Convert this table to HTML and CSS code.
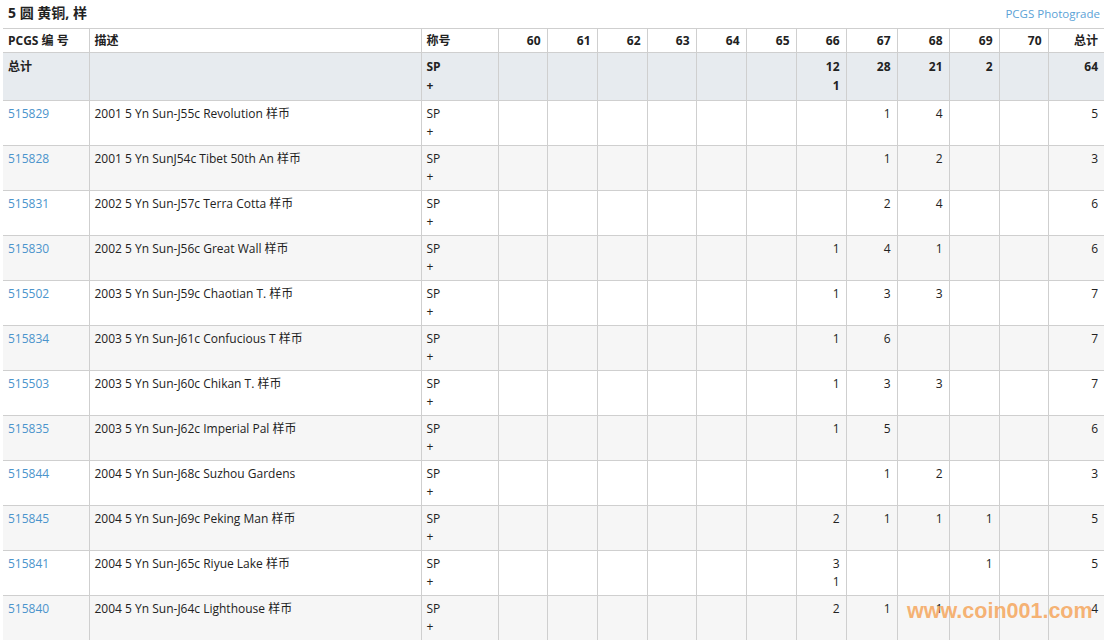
FILE: index.html
```html
<!DOCTYPE html>
<html lang="zh">
<head>
<meta charset="utf-8">
<link rel="stylesheet" href="styles.css">
</head>
<body>
<div class="page">
  <div class="topbar">
    <h1 class="title">5 圆 黄铜, 样</h1>
    <a class="photograde" href="#">PCGS Photograde</a>
  </div>
  <table class="pop">
    <colgroup>
      <col class="c-id"><col class="c-desc"><col class="c-des">
      <col class="c49"><col class="c50"><col class="c50"><col class="c49"><col class="c50"><col class="c50"><col class="c50"><col class="c51"><col class="c52"><col class="c50"><col class="c49"><col class="c56">
    </colgroup>
    <thead>
      <tr class="head">
        <th class="l">PCGS 编 号</th><th class="l">描述</th><th class="l">称号</th>
        <th>60</th><th>61</th><th>62</th><th>63</th><th>64</th><th>65</th><th>66</th><th>67</th><th>68</th><th>69</th><th>70</th><th>总计</th>
      </tr>
      <tr class="totals">
        <th class="l">总计</th><th class="l"></th><th class="l">SP<br>+</th>
        <th></th><th></th><th></th><th></th><th></th><th></th><th>12<br>1</th><th>28</th><th>21</th><th>2</th><th></th><th>64</th>
      </tr>
    </thead>
    <tbody>
      <tr><td class="l"><a href="#">515829</a></td><td class="l">2001 5 Yn Sun-J55c Revolution 样币</td><td class="l">SP<br>+</td><td></td><td></td><td></td><td></td><td></td><td></td><td></td><td>1</td><td>4</td><td></td><td></td><td>5</td></tr>
      <tr><td class="l"><a href="#">515828</a></td><td class="l">2001 5 Yn SunJ54c Tibet 50th An 样币</td><td class="l">SP<br>+</td><td></td><td></td><td></td><td></td><td></td><td></td><td></td><td>1</td><td>2</td><td></td><td></td><td>3</td></tr>
      <tr><td class="l"><a href="#">515831</a></td><td class="l">2002 5 Yn Sun-J57c Terra Cotta 样币</td><td class="l">SP<br>+</td><td></td><td></td><td></td><td></td><td></td><td></td><td></td><td>2</td><td>4</td><td></td><td></td><td>6</td></tr>
      <tr><td class="l"><a href="#">515830</a></td><td class="l">2002 5 Yn Sun-J56c Great Wall 样币</td><td class="l">SP<br>+</td><td></td><td></td><td></td><td></td><td></td><td></td><td>1</td><td>4</td><td>1</td><td></td><td></td><td>6</td></tr>
      <tr><td class="l"><a href="#">515502</a></td><td class="l">2003 5 Yn Sun-J59c Chaotian T. 样币</td><td class="l">SP<br>+</td><td></td><td></td><td></td><td></td><td></td><td></td><td>1</td><td>3</td><td>3</td><td></td><td></td><td>7</td></tr>
      <tr><td class="l"><a href="#">515834</a></td><td class="l">2003 5 Yn Sun-J61c Confucious T 样币</td><td class="l">SP<br>+</td><td></td><td></td><td></td><td></td><td></td><td></td><td>1</td><td>6</td><td></td><td></td><td></td><td>7</td></tr>
      <tr><td class="l"><a href="#">515503</a></td><td class="l">2003 5 Yn Sun-J60c Chikan T. 样币</td><td class="l">SP<br>+</td><td></td><td></td><td></td><td></td><td></td><td></td><td>1</td><td>3</td><td>3</td><td></td><td></td><td>7</td></tr>
      <tr><td class="l"><a href="#">515835</a></td><td class="l">2003 5 Yn Sun-J62c Imperial Pal 样币</td><td class="l">SP<br>+</td><td></td><td></td><td></td><td></td><td></td><td></td><td>1</td><td>5</td><td></td><td></td><td></td><td>6</td></tr>
      <tr><td class="l"><a href="#">515844</a></td><td class="l">2004 5 Yn Sun-J68c Suzhou Gardens</td><td class="l">SP<br>+</td><td></td><td></td><td></td><td></td><td></td><td></td><td></td><td>1</td><td>2</td><td></td><td></td><td>3</td></tr>
      <tr><td class="l"><a href="#">515845</a></td><td class="l">2004 5 Yn Sun-J69c Peking Man 样币</td><td class="l">SP<br>+</td><td></td><td></td><td></td><td></td><td></td><td></td><td>2</td><td>1</td><td>1</td><td>1</td><td></td><td>5</td></tr>
      <tr><td class="l"><a href="#">515841</a></td><td class="l">2004 5 Yn Sun-J65c Riyue Lake 样币</td><td class="l">SP<br>+</td><td></td><td></td><td></td><td></td><td></td><td></td><td>3<br>1</td><td></td><td></td><td>1</td><td></td><td>5</td></tr>
      <tr><td class="l"><a href="#">515840</a></td><td class="l">2004 5 Yn Sun-J64c Lighthouse 样币</td><td class="l">SP<br>+</td><td></td><td></td><td></td><td></td><td></td><td></td><td>2</td><td>1</td><td>1</td><td></td><td></td><td>4</td></tr>
    </tbody>
  </table>
  <div class="watermark">www.coin001.com</div>
</div>
</body>
</html>
```
FILE: styles.css
```css
html, body {
  margin: 0;
  padding: 0;
  background: #fff;
}
body {
  font-family: "Open Sans", "Noto Sans CJK SC", sans-serif;
  color: #222;
  font-size: 12px;
}
.page {
  position: relative;
  padding: 0 3px;
  width: 1101px;
  height: 641px;
  overflow: hidden;
}
.topbar {
  height: 28px;
  display: flex;
  align-items: flex-start;
  justify-content: space-between;
}
.title {
  margin: 4px 0 0 5px;
  font-size: 14px;
  font-weight: 700;
  line-height: 18px;
}
.photograde {
  margin: 6px 4px 0 0;
  font-size: 11.5px;
  line-height: 16px;
  color: #5ba2d6;
  text-decoration: none;
}
.pop {
  width: 1101px;
  table-layout: fixed;
  border-collapse: collapse;
}
.c-id { width: 86px; }
.c-desc { width: 332px; }
.c-des { width: 77px; }
.c49 { width: 49px; }
.c50 { width: 50px; }
.c51 { width: 51px; }
.c52 { width: 52px; }
.c56 { width: 56px; }
.pop th, .pop td {
  border-top: 1px solid #cfcfcf;
  border-left: 1px solid #cfcfcf;
  padding: 4px 6px 0 5px;
  text-align: right;
  vertical-align: top;
  line-height: 18px;
  white-space: nowrap;
  overflow: hidden;
}
.pop th:first-child, .pop td:first-child {
  border-left: none;
}
.pop .l {
  text-align: left;
}
.pop th {
  font-weight: 700;
  font-size: 12px;
}
.head th {
  height: 23px;
  padding-top: 0;
  vertical-align: middle;
  background: #fff;
}
.totals th {
  height: 43px;
  padding-top: 4px;
  line-height: 19px;
  background: #e7ebef;
}
.pop tbody td {
  height: 40px;
  font-size: 12px;
}
.pop tbody tr:nth-child(odd) td {
  background: #fff;
}
.pop tbody tr:nth-child(even) td {
  background: #f6f6f6;
}
.pop td a {
  color: #4b94cc;
  text-decoration: none;
}
.watermark {
  position: absolute;
  left: 907px;
  top: 599px;
  font-family: "Liberation Sans", Arial, sans-serif;
  font-weight: 700;
  font-size: 21.5px;
  color: rgba(245, 160, 80, 0.8);
}
```
